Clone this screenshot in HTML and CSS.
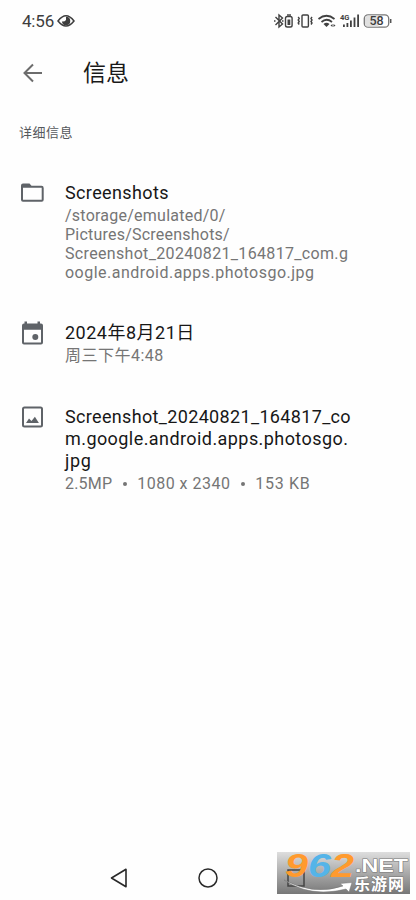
FILE: index.html
```
<!DOCTYPE html>
<html lang="zh-CN">
<head>
<meta charset="utf-8">
<title>信息</title>
<link rel="stylesheet" href="styles.css">
</head>
<body>
<div class="screen">
  <header class="status">
    <span class="clock">4:56</span>
    <svg class="eye" width="18" height="14" viewBox="0 0 18 14"><path d="M1 7Q9-3.500 17 7Q9 17 1 7Z" fill="none" stroke="#3d3d3d" stroke-width="1.500"/><path d="M9 2.800A4.200 4.200 0 1 1 4.900 7.500Q7.500 8 9 6Z" fill="#3d3d3d"/></svg>
    <svg class="indicators" width="120" height="18" viewBox="0 0 120 18">
      <g fill="none" stroke="#414141" stroke-width="1.400">
        <path d="M1.500 5L8.500 12L5 15V3L8.500 6L1.500 13"/>
        <path d="M0 9h1.500M8 9h1.500" />
        <rect x="11.500" y="4.500" width="6.600" height="10.500" rx="1.800"/>
        <path d="M13 3h4"/>
        <rect x="28" y="3" width="6.400" height="12" rx="1"/>
        <path d="M24.200 5l1 1.500-1 1.500 1 1.500-1 1.500 1 1.500M38 5l-1 1.500 1 1.500-1 1.500 1 1.500-1 1.500"/>
        <path d="M44.500 7Q52.500 .5 60.500 7M47.500 10Q52.500 5.500 58 10" stroke-width="1.700"/>
      </g>
      <g fill="#414141">
        <rect x="13.500" y="7.500" width="2.800" height="5.500"/>
        <path d="M49.500 12Q52.500 9.500 55.500 12L52.500 15Z"/>
        <path d="M56.500 13.500l2-1.500v3zM61.500 13.500l-2-1.500v3z"/>
        <rect x="69" y="12.500" width="1.800" height="2.500"/><rect x="72.500" y="11" width="1.800" height="4"/><rect x="76" y="8.500" width="1.800" height="6.500"/><rect x="79.600" y="5.500" width="1.800" height="9.500"/><rect x="83.200" y="2.500" width="1.800" height="12.500"/>
        <text x="66" y="8" class="net" textLength="9.500" lengthAdjust="spacingAndGlyphs">4G</text>
      </g>
      <rect x="90.300" y="2.800" width="24.400" height="12.400" rx="3.800" fill="#fff" stroke="#777" stroke-width="1.300"/>
      <path d="M94 3.500H104.500v11H94Q91 14.500 91 11V7Q91 3.500 94 3.500Z" fill="#e0e0e0"/>
      <path d="M116.700 7v4" stroke="#555" stroke-width="1.500"/>
      <text x="95.500" y="13.300" class="charge" textLength="14">58</text>
    </svg>
  </header>

  <div class="appbar">
    <svg width="20" height="20" viewBox="0 0 20 20" fill="none" stroke="#6c6c6c" stroke-width="2"><path d="M19 10H2M10 1.500L1.500 10L10 18.500"/></svg>
    <h1>信息</h1>
  </div>

  <h2>详细信息</h2>

  <main>
    <section class="row folder">
      <svg class="icon" width="24" height="24" viewBox="0 0 24 24"><path d="M3 2.500h6.500l2 2.300H21.500Q23.700 4.800 23.700 7V18.700Q23.700 20.700 21.700 20.700H3Q1 20.700 1 18.700V4.500Q1 2.500 3 2.500ZM3 6.800V18.700H21.700V6.800Z" fill="#5f6368" fill-rule="evenodd"/></svg>
      <div>
        <p class="title t1">Screenshots</p>
        <p class="sub"><span class="a">/storage/emulated/0/</span><span class="b">Pictures/Screenshots/</span><span class="c">Screenshot_20240821_164817_com.g</span><span class="d">oogle.android.apps.photosgo.jpg</span></p>
      </div>
    </section>
    <section class="row date">
      <svg class="icon" width="24" height="24" viewBox="0 0 24 24"><path fill="#5f6368" fill-rule="evenodd" d="M4.500 .5h2.500v2h10.500V.5H20v2h1Q23 2.500 23 4.500v17q0 2-2 2H4Q2 23.500 2 21.500V4.500Q2 2.500 4 2.500H4.500ZM4 8.800v12.700H21V8.800Z"/><circle cx="15.300" cy="16" r="3" fill="#5f6368"/></svg>
      <div>
        <p class="title t2">2024年8月21日</p>
        <p class="sub"><span class="e">周三下午4:48</span></p>
      </div>
    </section>
    <section class="row image">
      <svg class="icon" width="24" height="24" viewBox="0 0 24 24"><rect x="3" y="2.500" width="19" height="19" rx="1.500" fill="none" stroke="#5f6368" stroke-width="2"/><path fill="#5f6368" d="M6 18l3-4.500 2.500 2.600 3.400-4.400 4 6.300Z"/></svg>
      <div>
        <p class="title"><span class="f">Screenshot_20240821_164817_co</span><span class="g">m.google.android.apps.photosgo.</span><span class="h">jpg</span></p>
        <p class="sub meta"><span class="size">2.5MP</span><i></i><span class="dim">1080 x 2340</span><i></i><span class="bytes">153 KB</span></p>
      </div>
    </section>
  </main>

  <nav>
    <svg class="back" width="18" height="20" viewBox="0 0 18 20"><path d="M1.500 10L16 1.300V18.700Z" fill="none" stroke="#292929" stroke-width="1.600" stroke-linejoin="round"/></svg>
    <svg class="home" width="20" height="20" viewBox="0 0 20 20"><circle cx="10" cy="10" r="9" fill="none" stroke="#292929" stroke-width="1.500"/></svg>
    <svg class="brand" width="133" height="42" viewBox="0 0 133 42">
      <defs><linearGradient id="shade" x2="0" y2="1"><stop stop-color="#dedede"/><stop offset=".5" stop-color="#aaa"/><stop offset="1" stop-color="#777"/></linearGradient></defs>
      <rect width="133" height="42" fill="url(#shade)"/>
      <rect x="11" y="18" width="16" height="16" fill="none" stroke="#444" stroke-width="1.500"/>
      <path d="M7 28Q37 44 66 34L63 31.500L75 30.500L72 40L69 37Q34 46 7 28Z" fill="#fff" stroke="#777" stroke-width=".5"/>
      <g class="digits"><text x="8" y="25" fill="#ff9a2e" textLength="23" lengthAdjust="spacingAndGlyphs">9</text><text x="31" y="25" fill="#55b4e8" textLength="23" lengthAdjust="spacingAndGlyphs">6</text><text x="54" y="25" fill="#ff9a2e" textLength="23" lengthAdjust="spacingAndGlyphs">2</text></g>
      <text class="net-name" x="78" y="19.500" textLength="53" lengthAdjust="spacingAndGlyphs">.NET</text>
      <text class="cn-name" x="77" y="38" textLength="50">乐游网</text>
    </svg>
  </nav>
</div>
</body>
</html>
```
FILE: styles.css
```
* { box-sizing: border-box; }
body { margin: 0; background: #fff; font-family: Roboto, "Noto Sans CJK SC", sans-serif; }
h1, h2, p { margin: 0; font-weight: 400; }
svg { display: block; flex: none; }
.screen { width: 416px; height: 900px; display: flex; flex-direction: column; background: #fefefe; overflow: hidden; }
.status { height: 42px; display: flex; align-items: center; padding-left: 22px; color: #3d3d3d; }
.clock { width: 35px; font-size: 17px; letter-spacing: -.2px; }
.indicators { margin-left: 199px; }
.net { font: 700 8px Roboto, sans-serif; }
.charge { font: 500 12.5px Roboto, sans-serif; fill: #3d3d3d; }
.appbar { height: 62px; display: flex; align-items: center; padding-left: 23px; gap: 40px; color: #191919; }
.appbar h1 { padding-top: 2px; font-size: 23px; line-height: 30px; }
h2 { height: 56px; padding: 19px 0 0 19px; font-size: 13px; line-height: 20px; letter-spacing: .5px; color: #55585c; }
main { flex: 1; padding-top: 21px; }
.row { display: flex; padding-left: 20px; gap: 21px; }
.folder { height: 140px; }
.date { height: 84px; }
.title { padding-top: 1px; font-size: 18px; line-height: 22px; color: #171717; white-space: nowrap; }
.sub { margin-top: 2px; font-size: 16px; line-height: 19px; color: #757575; white-space: nowrap; }
.title span, .sub > span { display: block; }
.t1 { letter-spacing: .38px; }
.t2 { letter-spacing: .5px; }
.a { letter-spacing: .24px; }
.b { letter-spacing: .22px; }
.c { letter-spacing: .33px; }
.d { letter-spacing: .48px; }
.e { letter-spacing: .5px; }
.f { letter-spacing: .34px; }
.g { letter-spacing: .43px; }
.h { letter-spacing: .7px; }
.meta { display: flex; align-items: center; }
.meta i { width: 4px; height: 4px; margin: 0 10.5px; border-radius: 50%; background: #757575; }
.size { letter-spacing: .2px; }
.dim { letter-spacing: .48px; }
.bytes { letter-spacing: .7px; }
nav { height: 48px; display: flex; align-items: flex-start; }
.back { margin: 16px 0 0 110px; }
.home { margin: 16px 0 0 70px; }
.brand { margin-left: 59px; overflow: visible; }
.digits text { font: italic 700 33px "Liberation Sans", sans-serif; }
.net-name { font: 700 18px "Liberation Sans", sans-serif; fill: #fff; stroke: #777; stroke-width: 1px; paint-order: stroke; }
.cn-name { font: 700 16px "Noto Sans CJK SC", sans-serif; fill: #fff; stroke: #777; stroke-width: 1px; paint-order: stroke; }
```
